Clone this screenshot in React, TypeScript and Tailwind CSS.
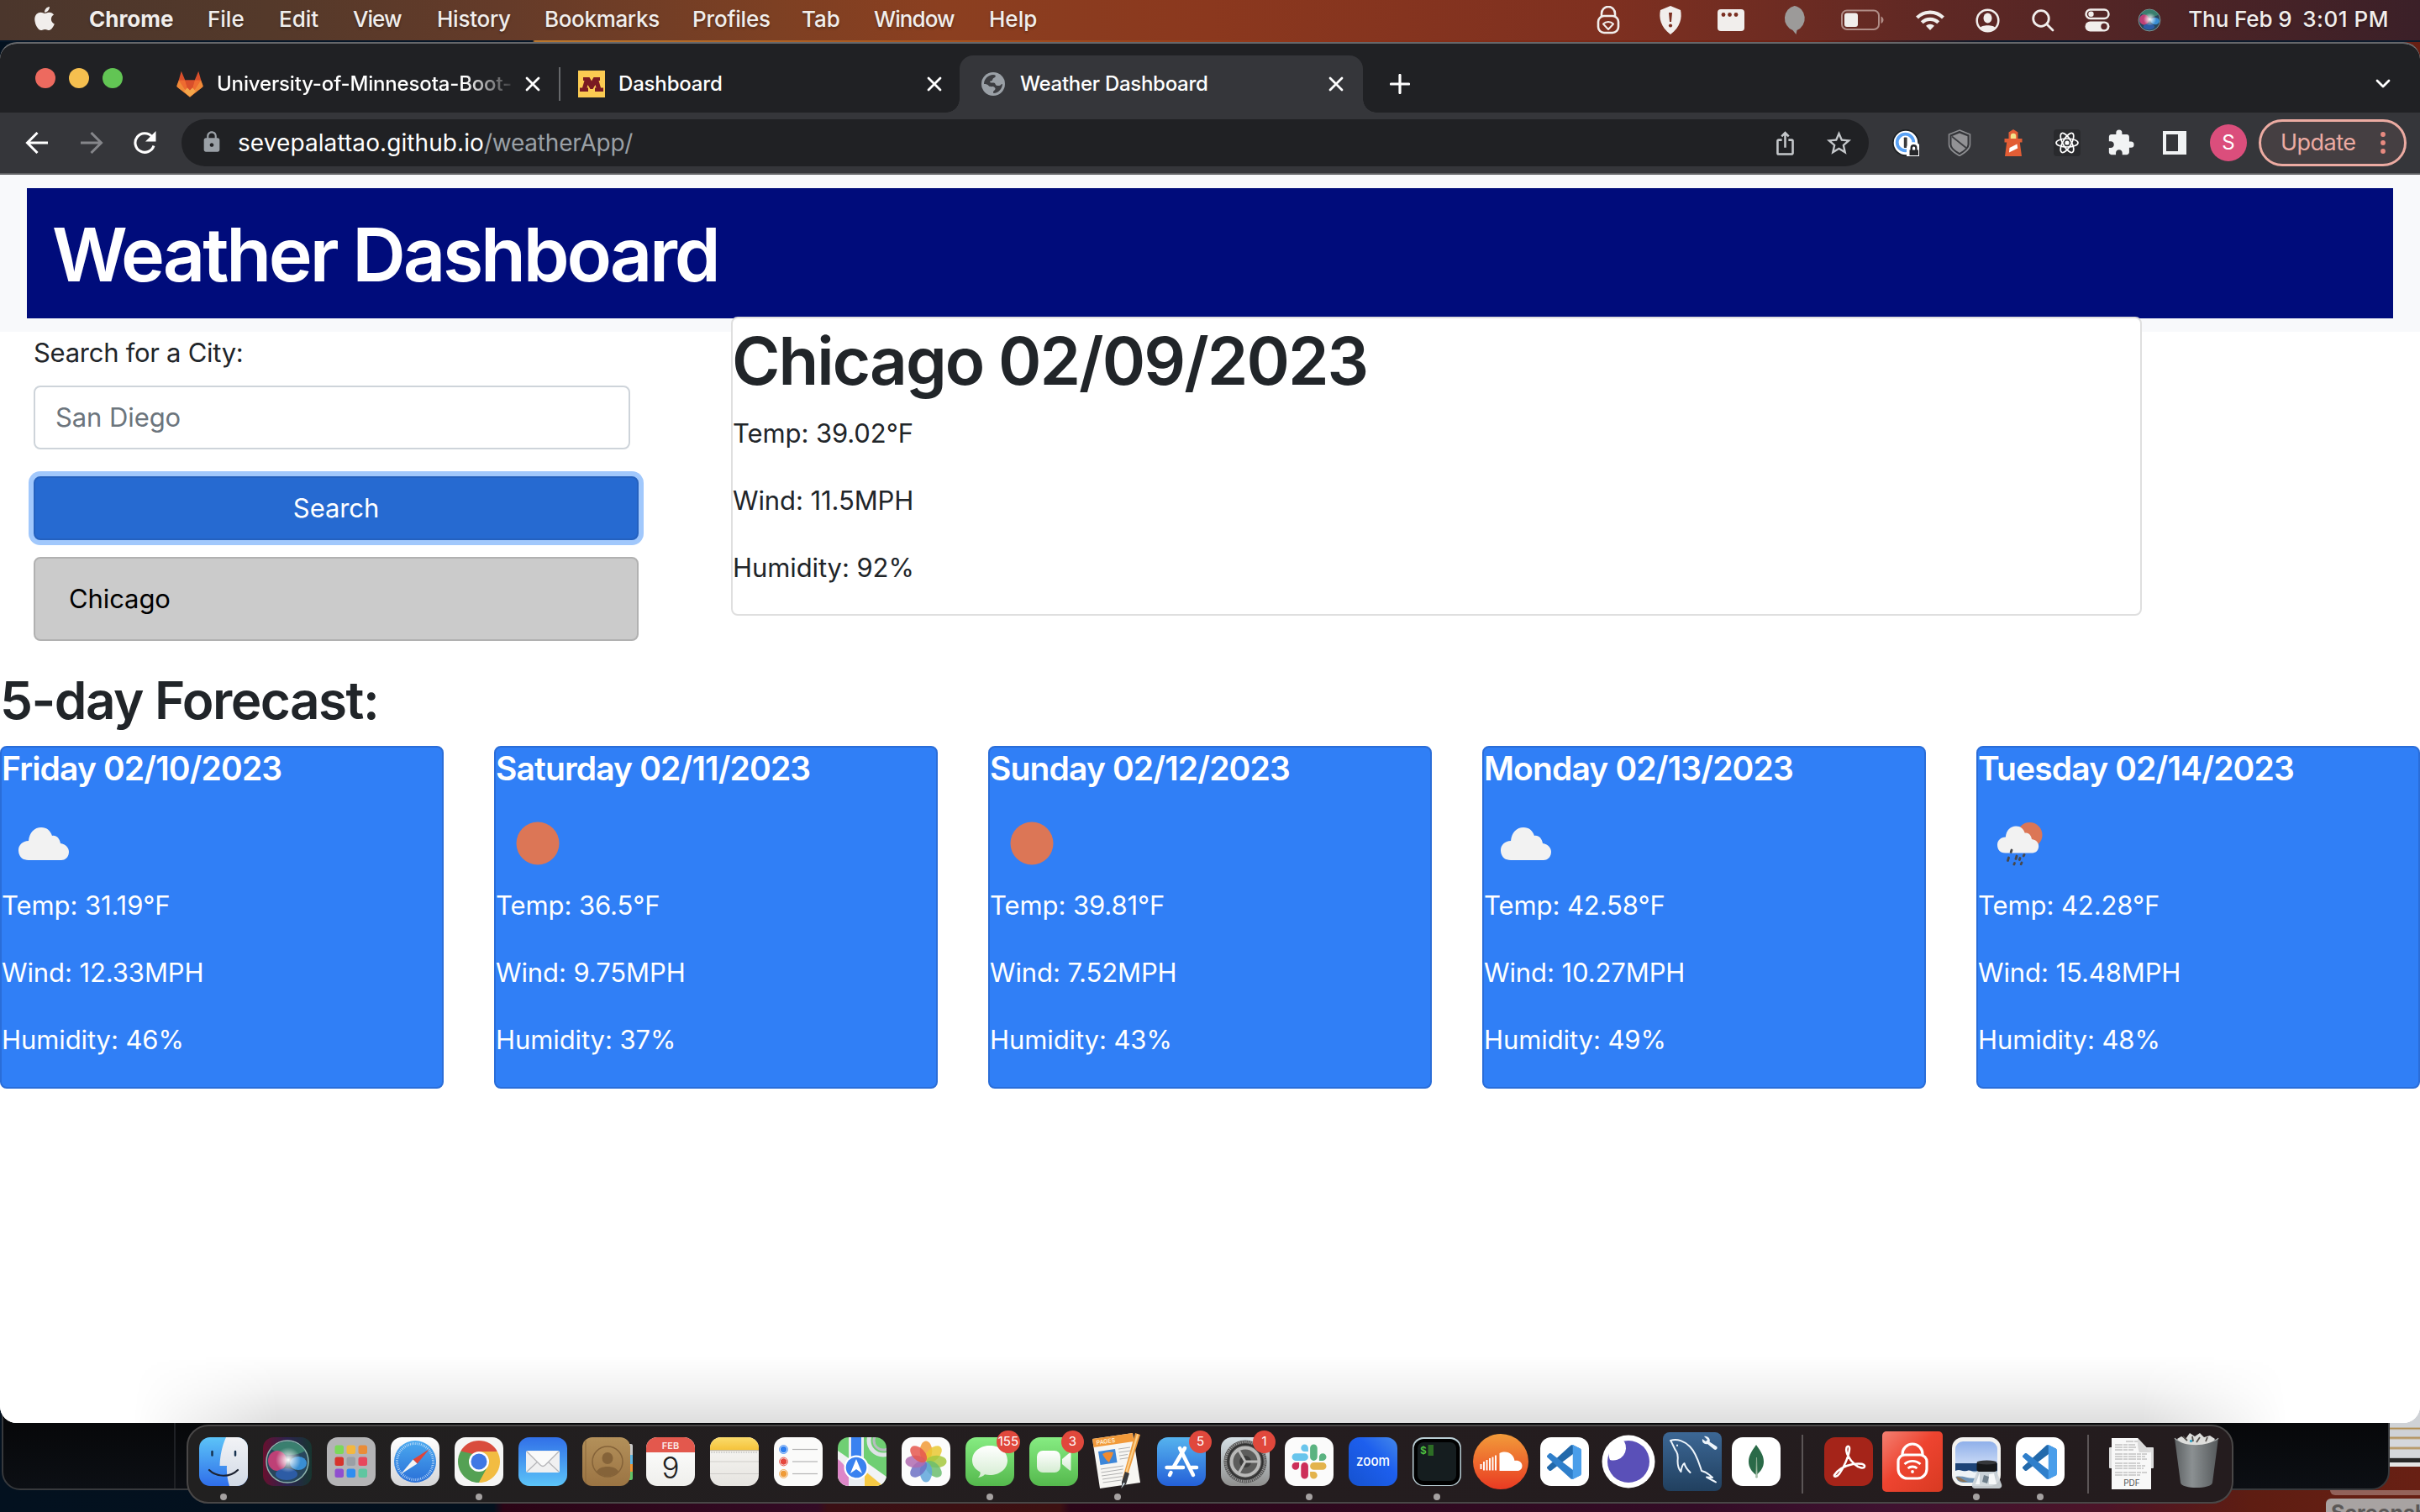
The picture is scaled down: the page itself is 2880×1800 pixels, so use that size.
import React from "react";
import { FaApple } from "react-icons/fa";
import { MdExtension, MdIosShare, MdLock, MdStarOutline } from "react-icons/md";

/* ---------- macOS menu bar ---------- */

const menus = [
  { label: "Chrome", cls: "w-[141px] font-bold" },
  { label: "File", cls: "w-[85px]" },
  { label: "Edit", cls: "w-[88px]" },
  { label: "View", cls: "w-[100px] tracking-[-0.036em]" },
  { label: "History", cls: "w-[128px] tracking-[-0.01em]" },
  { label: "Bookmarks", cls: "w-[176px] tracking-[-0.013em]" },
  { label: "Profiles", cls: "w-[130px] tracking-[-0.007em]" },
  { label: "Tab", cls: "w-[86px]" },
  { label: "Window", cls: "w-[137px] tracking-[-0.035em]" },
  { label: "Help", cls: "w-[80px]" },
];

function MenuBar() {
  return (
    <header className="flex h-12 w-full items-center bg-[linear-gradient(90deg,#4b362c_0%,#54392a_11%,#653b29_21%,#7d4023_32%,#8b3f20_39%,#8b381e_50%,#7f3020_66%,#5f2824_80%,#3b2028_100%)] text-[26px] font-medium text-[#f1eeec] [text-shadow:0_2px_3px_rgba(0,0,0,0.3)]">
      <FaApple className="ml-[39px] mb-1 h-[32px] w-[28px]" />
      <nav className="mb-[3px] ml-[39px] flex">
        {menus.map((m) => (
          <span key={m.label} className={m.cls}>{m.label}</span>
        ))}
      </nav>
      <div className="ml-auto flex h-12 items-center pr-[37px]">
        <svg className="mr-[45px]" width="28" height="34" viewBox="0 0 28 34" fill="none" stroke="currentColor" strokeWidth="2.6">
          <rect x="2" y="12" width="24" height="20" rx="7" />
          <path d="M6 13V9a8 8 0 0 1 16 0v4" />
          <path d="M14 28l-6-6.500a8.500 8.500 0 0 1 12 0z" strokeWidth="2" strokeLinejoin="round" />
        </svg>
        <svg className="mr-[41px]" width="30" height="36" viewBox="0 0 30 36">
          <path d="M15 1l12 5c2 9 0 20-12 29C3 26 1 15 3 6z" fill="currentColor" />
          <path d="M13 9h4l-1 11h-2z" fill="#7a2e20" />
          <circle cx="15" cy="24.500" r="2.100" fill="#7a2e20" />
        </svg>
        <svg className="mr-[45px]" width="32" height="26" viewBox="0 0 32 26">
          <rect width="32" height="26" rx="4" fill="currentColor" />
          <g fill="#7a2e20"><circle cx="7" cy="6.500" r="2.400" /><circle cx="14.500" cy="6.500" r="2.400" /><circle cx="22" cy="6.500" r="2.400" /></g>
        </svg>
        <svg className="mr-[41px]" width="29" height="36" viewBox="0 0 29 36" fill="#9c9a99">
          <path d="M14.500 1a14 15 0 0 1 3 29l-1 5-4-5A14 15 0 0 1 14.500 1z" />
        </svg>
        <svg className="mr-[38px]" width="51" height="26" viewBox="0 0 51 26">
          <rect x="1" y="1.500" width="44" height="22.500" rx="6" fill="none" stroke="#b08c86" strokeWidth="2" />
          <rect x="4" y="4.500" width="16" height="16.500" rx="3" fill="currentColor" />
          <path d="M47.500 8.500c4 1.500 4 7 0 8.500z" fill="#b08c86" />
        </svg>
        <svg className="mr-[37px]" width="34" height="26" viewBox="0 0 34 26" fill="none" stroke="currentColor" strokeWidth="4.200">
          <path d="M1.500 10a22 22 0 0 1 31 0" />
          <path d="M7.200 15.800a14 14 0 0 1 19.600 0" />
          <path d="M17 25l-5-5.200a7.200 7.200 0 0 1 10 0z" fill="currentColor" stroke="none" />
        </svg>
        <svg className="mr-[38px]" width="29" height="29" viewBox="0 0 29 29">
          <circle cx="14.500" cy="14.500" r="12.800" fill="none" stroke="currentColor" strokeWidth="2.500" />
          <ellipse cx="14.500" cy="11.500" rx="5" ry="6" fill="currentColor" />
          <path d="M5 23.500c2-4.500 17-4.500 19 0a13 13 0 0 1-19 0z" fill="currentColor" />
        </svg>
        <svg className="mr-[36px]" width="27" height="27" viewBox="0 0 27 27" fill="none" stroke="currentColor" strokeWidth="2.800" strokeLinecap="round">
          <circle cx="11" cy="11" r="9.300" /><path d="M18 18l7 7" />
        </svg>
        <svg className="mr-[32px]" width="30" height="28" viewBox="0 0 30 28">
          <rect x="1.500" y="1.500" width="27" height="10.500" rx="5.250" fill="none" stroke="currentColor" strokeWidth="2.500" />
          <circle cx="7.500" cy="6.750" r="3.200" fill="currentColor" />
          <rect x="0.500" y="15.500" width="29" height="12" rx="6" fill="currentColor" />
          <circle cx="23" cy="21.500" r="3.700" fill="#572628" />
        </svg>
        <svg className="mr-[31px]" width="30" height="30" viewBox="0 0 58 58"><SiriOrb /></svg>
        <span className="mb-[3px] w-[136px] tracking-[-0.004em]">Thu Feb 9</span>
        <span className="mb-[3px] tracking-[0.02em]">3:01 PM</span>
      </div>
    </header>
  );
}

/* ---------- Chrome tab strip and toolbar ---------- */

function CloseIcon({ className = "" }: { className?: string }) {
  return (
    <svg className={`shrink-0 ${className}`} width="18" height="18" viewBox="0 0 18 18" stroke="#fff" strokeWidth="2.800" strokeLinecap="round">
      <path d="M2 2l14 14M16 2L2 16" />
    </svg>
  );
}

function TabStrip() {
  return (
    <div className="flex h-[82px] w-full bg-[#202124] text-2xl font-medium text-white">
      <div className="flex w-[210px] shrink-0 items-center gap-4 pl-[42px]">
        <i className="size-6 rounded-full bg-[#ed6a5f]" />
        <i className="size-6 rounded-full bg-[#f5bf4f]" />
        <i className="size-6 rounded-full bg-[#62c554]" />
      </div>
      <div className="mt-[14px] flex h-[68px] w-[457px] shrink-0 items-center">
        <svg className="shrink-0" width="32" height="32" viewBox="0 0 32 32">
          <path d="M16 31.500L.5 19 5.800.8 10.300 11.500h11.400L26.200.8 31.500 19z" fill="#d84f2b" />
          <path d="M16 31.500L10.300 11.500H3zM16 31.500l5.700-20H29z" fill="#ee6b31" />
          <path d="M16 31.500L3 11.500.5 17.500c-.3 1 0 2 .7 2.600zM16 31.500l13-20 2.500 6c.3 1 0 2-.7 2.600z" fill="#f08a38" />
          <path d="M10.300 11.500h11.400L16 31.500z" fill="#d84f2b" />
          <path d="M16 31.500l-7-7 4-4 3 3 3-3 4 4z" fill="#f4a64a" />
        </svg>
        <span className="ml-4 w-[351px] shrink-0 overflow-hidden whitespace-nowrap tracking-[-0.0066em] [mask-image:linear-gradient(90deg,#000_84%,transparent_102%)]">University-of-Minnesota-Boot-</span>
        <CloseIcon className="ml-4" />
        <i className="ml-auto h-10 w-0.5 bg-[#66686b]" />
      </div>
      <div className="mt-[14px] flex h-[68px] w-[475px] shrink-0 items-center pl-[21px]">
        <svg width="32" height="32" viewBox="0 0 32 32">
          <rect width="32" height="32" fill="#fbcb52" />
          <path d="M6 8h7.500l2.500 4.500L18.500 8H26v4h-1.500l2.500 8.500h3V25H20v-4.500h1.500l-1-3.500-3 5h-3l-3-5-1 3.500H12V25H2v-4.500h3L7.500 12H6z" fill="#7a1a22" />
        </svg>
        <span className="ml-4 tracking-[-0.007em]">Dashboard</span>
        <CloseIcon className="ml-auto mr-[21px]" />
      </div>
      <div className="relative mt-[14px] flex h-[68px] w-[480px] shrink-0 items-center rounded-t-2xl bg-[#35363a] pl-[26px]">
        <i className="absolute bottom-0 -left-4 size-4 bg-[radial-gradient(circle_at_0_0,transparent_15.5px,#35363a_16px)]" />
        <i className="absolute bottom-0 -right-4 size-4 bg-[radial-gradient(circle_at_100%_0,transparent_15.5px,#35363a_16px)]" />
        <svg width="28" height="28" viewBox="0 0 28 28">
          <circle cx="14" cy="14" r="14" fill="#9aa0a6" />
          <path d="M14 3c2.500 0 3.500 1 2.500 2.500-1 1.500-2.500 1-3 2.500s-.5 2.500-2.500 2.500c-1.500 0-1 2 .5 2 2 0 4.500-.5 5 1.500s2 2 4.500 2c2 0 2-2 4-2-.5 6-4.500 10.500-10.500 11-1-1-.5-2.500 1-3.500s1.500-3-.5-4c-2-1-5 .5-6.500-1.500-1-1.500-3-2-5.500-2C3 8 8 3 14 3z" fill="#3c3d41" />
        </svg>
        <span className="ml-[18px] tracking-[-0.012em]">Weather Dashboard</span>
        <CloseIcon className="ml-auto mr-[23px]" />
      </div>
      <div className="mt-[14px] flex h-[68px] grow items-center pl-8 pr-[35px]">
        <svg width="24" height="24" viewBox="0 0 24 24" stroke="#fff" strokeWidth="3.200" strokeLinecap="round"><path d="M12 1.500v21M1.500 12h21" /></svg>
        <svg className="ml-auto" width="18" height="12" viewBox="0 0 18 12" fill="none" stroke="#fff" strokeWidth="2.800" strokeLinecap="round" strokeLinejoin="round"><path d="M2 2l7 7 7-7" /></svg>
      </div>
    </div>
  );
}

function Toolbar() {
  return (
    <div className="flex h-[74px] w-full items-center border-b-2 border-[#5f6063] bg-[#35363a]">
      <svg className="ml-[30px]" width="28" height="26" viewBox="0 0 28 26" fill="none" stroke="#fff" strokeWidth="3"><path d="M27 13H3M14.500 1L2.500 13l12 12" /></svg>
      <svg className="ml-[37px]" width="28" height="26" viewBox="0 0 28 26" fill="none" stroke="#85868a" strokeWidth="3"><path d="M1 13h24M13.500 1l12 12-12 12" /></svg>
      <svg className="ml-[35px]" width="28" height="28" viewBox="0 0 28 28">
        <path d="M22.700 6.500A11.300 11.300 0 1 0 25 17.500" fill="none" stroke="#fff" strokeWidth="3.100" />
        <path d="M27.500 0v12.500H15z" fill="#fff" />
      </svg>
      <div className="ml-[30px] flex h-14 w-[2008px] items-center rounded-full bg-[#202124] text-[28px]">
        <MdLock className="ml-[22px] mb-0.5 size-7 text-[#9aa0a6]" />
        <span className="ml-[17px] text-white tracking-[0.003em]">sevepalattao.github.io</span>
        <span className="text-[#9aa0a6] tracking-[-0.008em]">/weatherApp/</span>
        <MdIosShare className="ml-auto size-[31px] text-[#c4c7ca]" />
        <MdStarOutline className="ml-[31px] mr-[18px] size-[35px] text-[#c4c7ca]" />
      </div>
      <svg className="ml-[28px]" width="32" height="32" viewBox="0 0 32 32">
        <circle cx="16" cy="16" r="16" fill="#1d2023" />
        <circle cx="16" cy="16" r="14.300" fill="#fff" />
        <circle cx="15.500" cy="15.500" r="9.800" fill="none" stroke="#5aa2f5" strokeWidth="3.800" />
        <rect x="13.800" y="9.500" width="3.800" height="12.500" rx="0.800" fill="#3a3a3c" />
        <path d="M17 32V21a9 9 0 0 1 15-3v14z" fill="#fff" />
        <path d="M20.500 24.500h1V22a4 4 0 0 1 8 0v2.500H31V31H20.500z" fill="#26272a" />
        <path d="M24 24.500V22a1.600 1.600 0 0 1 3.200 0v2.500z" fill="#fff" />
      </svg>
      <svg className="ml-[32px]" width="32" height="32" viewBox="0 0 32 32">
        <path d="M16 1l12.500 5v12c0 5.500-6 9.500-12.500 13.500C9.500 27.500 3.500 23.500 3.500 18V6z" fill="none" stroke="#8c8d90" strokeWidth="1.600" />
        <path d="M16 4.500l9.500 3.700v9.300c0 4.300-4.500 7.500-9.500 10.500-5-3-9.500-6.200-9.500-10.500V8.200z" fill="#929295" />
        <path d="M7 8.500l17.500 14" stroke="#3d3e42" strokeWidth="1.800" />
      </svg>
      <svg className="ml-[32px]" width="32" height="32" viewBox="0 0 32 32">
        <path d="M16 0l5.500 3.500V11h5v4.500h-2.700L26 32H6l2.200-16.500H5.500V11h5V3.500z" fill="#e25d35" />
        <path d="M12.800 11V8a3.200 3.200 0 0 1 6.400 0v3z" fill="#f3e38b" />
        <path d="M11.500 22l9-4.500.7 5L11 27.500z" fill="#fff" />
      </svg>
      <svg className="ml-[32px]" width="32" height="32" viewBox="0 0 32 32" fill="none" stroke="#fff" strokeWidth="1.700">
        <rect width="32" height="32" rx="4" fill="#292a2d" stroke="none" />
        <ellipse cx="16" cy="16" rx="13" ry="5" />
        <ellipse cx="16" cy="16" rx="13" ry="5" transform="rotate(60 16 16)" />
        <ellipse cx="16" cy="16" rx="13" ry="5" transform="rotate(120 16 16)" />
        <circle cx="16" cy="16" r="2.600" fill="#fff" stroke="none" />
      </svg>
      <MdExtension className="ml-[31px] size-[34px] text-[#f1f3f4]" />
      <svg className="ml-[33px]" width="28" height="28" viewBox="0 0 28 28"><path d="M0 0h28v28H0zM4 4v20h14V4z" fill="#f1f3f4" fillRule="evenodd" /></svg>
      <span className="ml-[28px] flex size-11 items-center justify-center rounded-full bg-[#db4e7c] text-[24px] text-white">S</span>
      <div className="ml-[14px] flex h-14 w-[176px] items-center rounded-full border-[3px] border-[#ecaba2] bg-[#453f42] pl-[23px] text-[27px] tracking-[-0.02em] text-[#ecaba2]">
        Update
        <svg className="ml-auto mr-[22px]" width="6" height="28" viewBox="0 0 6 28" fill="#e88a80"><circle cx="3" cy="4" r="2.900" /><circle cx="3" cy="14" r="2.900" /><circle cx="3" cy="24" r="2.900" /></svg>
      </div>
    </div>
  );
}

/* ---------- Weather page ---------- */

const CLOUD = "M12 39C3 39 0 33 0 27c0-6 5-11 12-11C13 6 19 0 27 0c7 0 11 4 13 10 5-1 9 3 10 9 6 1 10 5 10 10 0 6-4 10-9 10z";

function WeatherIcon({ kind }: { kind: string }) {
  return (
    <svg className="block size-[100px]" viewBox="0 0 100 100">
      {kind === "cloud" && <path transform="translate(20 31)" d={CLOUD} fill="#f2f2f2" />}
      {kind === "sun" && <circle cx="50" cy="50" r="25.500" fill="#dc7656" />}
      {kind === "rain" && (
        <g>
          <ellipse cx="61.500" cy="40" rx="15" ry="15" fill="#dc7656" />
          <path transform="translate(23 29.500) scale(0.82)" d={CLOUD} fill="#f2f2f2" />
          <path d="M40 58l-.8 2.500M36.500 67l-1 3.500M46 65l-1 3.500M43.500 73.500l-.6 1.500M52 73l-.8 1.800M55 63.500l-.8 1.500M50 67.500l-.6 2" stroke="#48484a" strokeWidth="2.800" strokeLinecap="round" />
        </g>
      )}
    </svg>
  );
}

function Readings({ temp, wind, humidity }: { temp: string; wind: string; humidity: string }) {
  return (
    <>
      <p className="mb-8 leading-[48px]">Temp: {temp}°F</p>
      <p className="mb-8 leading-[48px]">Wind: {wind}MPH</p>
      <p className="mb-8 leading-[48px]">Humidity: {humidity}%</p>
    </>
  );
}

const forecast = [
  { day: "Friday 02/10/2023", icon: "cloud", temp: "31.19", wind: "12.33", humidity: "46" },
  { day: "Saturday 02/11/2023", icon: "sun", temp: "36.5", wind: "9.75", humidity: "37" },
  { day: "Sunday 02/12/2023", icon: "sun", temp: "39.81", wind: "7.52", humidity: "43" },
  { day: "Monday 02/13/2023", icon: "cloud", temp: "42.58", wind: "10.27", humidity: "49" },
  { day: "Tuesday 02/14/2023", icon: "rain", temp: "42.28", wind: "15.48", humidity: "48" },
];

function WeatherPage() {
  return (
    <main className="grow bg-white text-[31px] tracking-[-0.003em] text-[#212529]">
      <div className="h-[187px] bg-[#f8f9fb] px-8 py-4">
        <h1 className="flex h-[155px] items-center bg-[#000c7b] pl-[30px] pt-[3px] text-[88px] font-[570] tracking-[-0.0365em] text-white">Weather Dashboard</h1>
      </div>
      <div className="flex h-[401px]">
        <section className="w-[870px] pl-10">
          <label className="mt-px block leading-[48px] tracking-[-0.009em]">Search for a City:</label>
          <div className="mt-[15px] flex h-[76px] w-[710px] items-center rounded-lg border-2 border-[#ced4da] pl-6 pt-px text-[#6c757d]">San Diego</div>
          <div className="mt-8 flex h-[76px] w-[720px] items-center justify-center rounded-lg border-2 border-[#2461bf] bg-[#266ad1] pt-px text-white shadow-[0_0_0_6px_#a1c8fc]">Search</div>
          <div className="mt-5 flex h-[100px] w-[720px] items-center rounded-lg border-2 border-[#b1b1b1] bg-[#cbcbcb] pl-[40px] pt-px text-black">Chicago</div>
        </section>
        <section className="relative -mt-[18px] h-[356px] w-[1679px] rounded-lg border-2 border-[#dfdfdf] bg-white">
          <h2 className="-ml-px mb-[14px] pt-[3px] text-[78px] font-[570] leading-[96px] tracking-[-0.025em]">Chicago 02/09/2023</h2>
          <Readings temp="39.02" wind="11.5" humidity="92" />
        </section>
      </div>
      <h2 className="mb-4 text-[62px] font-[570] leading-[76px] tracking-[-0.025em]">5-day Forecast:</h2>
      <div className="grid grid-cols-5 gap-[60px]">
        {forecast.map((f) => (
          <article key={f.day} className="h-[408px] rounded-lg border-2 border-[#2a6dd8] bg-[#307ff6] text-white">
            <h3 className="mb-[15px] pt-px text-[39px] font-[560] leading-[48px] tracking-[-0.022em]">{f.day}</h3>
            <WeatherIcon kind={f.icon} />
            <Readings temp={f.temp} wind={f.wind} humidity={f.humidity} />
          </article>
        ))}
      </div>
    </main>
  );
}

/* ---------- Dock ---------- */

function Grad({ id, from, to }: { id: string; from: string; to: string }) {
  return (
    <linearGradient id={id} x1="0" y1="0" x2="0" y2="1">
      <stop offset="0" stopColor={from} />
      <stop offset="1" stopColor={to} />
    </linearGradient>
  );
}

function Tile({ fill, children }: { fill: string; children?: React.ReactNode }) {
  return (
    <>
      <rect width="58" height="58" rx="13" fill={fill} />
      {children}
    </>
  );
}

function SiriOrb() {
  return (
    <g>
      <defs>
        <radialGradient id="glow"><stop offset="0" stopColor="#fff" /><stop offset="1" stopColor="#fff" stopOpacity="0" /></radialGradient>
      </defs>
      <circle cx="29" cy="29" r="25" fill="#28465c" stroke="#8fb5ad" strokeWidth="1.500" />
      <path d="M10 14a25 25 0 0 1 40 2C40 24 20 22 10 14z" fill="#3f8d74" opacity="0.800" />
      <ellipse cx="17" cy="28" rx="11" ry="12" fill="#d8407a" opacity="0.850" />
      <ellipse cx="42" cy="31" rx="10" ry="8" fill="#3c9be8" opacity="0.850" />
      <ellipse cx="28" cy="44" rx="13" ry="7" fill="#2e62b8" opacity="0.800" />
      <circle cx="30" cy="27" r="15" fill="url(#glow)" />
    </g>
  );
}

function Finder() {
  return (
    <g>
      <defs><Grad id="fi1" from="#5cc4f8" to="#2f6eea" /><Grad id="fi2" from="#f2f3f6" to="#d2dae6" /><clipPath id="fic"><rect width="58" height="58" rx="13" /></clipPath></defs>
      <g clipPath="url(#fic)">
        <rect width="58" height="58" fill="url(#fi1)" />
        <path d="M32 0C27 11 25 22 24.500 34H33c-.5 8 .5 16 3 24h23V0z" fill="url(#fi2)" />
        <path d="M15.500 17v4.500M43 17v4.500" stroke="#16324f" strokeWidth="2.500" strokeLinecap="round" />
        <path d="M12 39c9 9 25 9 34 0" fill="none" stroke="#1c2230" strokeWidth="2.200" strokeLinecap="round" />
      </g>
    </g>
  );
}

function Siri() {
  return (
    <g>
      <defs><linearGradient id="si"><stop offset="0" stopColor="#68102e" /><stop offset="0.500" stopColor="#2c2350" /><stop offset="1" stopColor="#17352f" /></linearGradient></defs>
      <Tile fill="url(#si)"><SiriOrb /></Tile>
    </g>
  );
}

const padColors = ["#7bd85a", "#f3b73f", "#ea8c38", "#d6332c", "#9a9fa5", "#e8475c", "#8f4fcf", "#2f8df0", "#5fc6a0"];

function Launchpad() {
  return (
    <Tile fill="#b4b4b6">
      {padColors.map((c, i) => (
        <rect key={c} x={9.500 + (i % 3) * 14} y={9.500 + Math.floor(i / 3) * 14} width="10.500" height="10.500" rx="2.500" fill={c} />
      ))}
    </Tile>
  );
}

function Safari() {
  return (
    <g>
      <defs><Grad id="sf1" from="#ffffff" to="#d5d5d7" /><Grad id="sf2" from="#4ba9ef" to="#2a70d8" /></defs>
      <Tile fill="url(#sf1)">
        <circle cx="29" cy="29" r="25" fill="url(#sf2)" />
        <circle cx="29" cy="29" r="21.500" fill="none" stroke="#d7e9fb" strokeWidth="3" strokeDasharray="0.700 1.500" />
        <path d="M46 14L26.500 26.500l5 5z" fill="#e0443a" />
        <path d="M12 44l14.500-17.500 5 5z" fill="#f4f4f4" />
      </Tile>
    </g>
  );
}

function Chrome() {
  return (
    <Tile fill="#f5f5f4">
      <path d="M29 29L7.350 16.500a25 25 0 0 1 43.300 0z" fill="#d94c3d" />
      <path d="M29 29L7.350 16.500A25 25 0 0 0 29 54z" fill="#54a154" />
      <path d="M29 29l21.650-12.500A25 25 0 0 1 29 54z" fill="#f2bc42" />
      <path d="M29 17h22l-9 7zM29 54l11-19.500 4 4z" fill="#f2bc42" />
      <path d="M18.600 35L7.350 16.500 22 20zM29 54l10.400-19L29 40z" fill="#54a154" />
      <path d="M29 54l10.400-19 6 4z" fill="#f2bc42" />
      <circle cx="29" cy="29" r="12" fill="#fff" />
      <circle cx="29" cy="29" r="9.500" fill="#3f78e4" />
    </Tile>
  );
}

function Mail() {
  return (
    <g>
      <defs><Grad id="ml" from="#3170e8" to="#5cc4f8" /></defs>
      <Tile fill="url(#ml)">
        <rect x="9" y="16" width="40" height="26" rx="2" fill="#f0f0f1" />
        <path d="M10 41l14-13M48 41L34 28" stroke="#b5b5b8" strokeWidth="1.200" />
        <path d="M10 17l16 16c2 2 4 2 6 0l16-16" fill="#fafafa" stroke="#b5b5b8" strokeWidth="1.300" />
      </Tile>
    </g>
  );
}

function Contacts() {
  return (
    <g>
      <path d="M54 8h4a2 2 0 0 1 2 2v12h-6z" fill="#c9c9c9" /><path d="M54 21h6v11h-6z" fill="#5fb7e5" /><path d="M54 32h6v9h-6z" fill="#ee9434" /><path d="M54 41h6v8a2 2 0 0 1-2 2h-4z" fill="#62c466" />
      <defs><Grad id="ct" from="#b3905a" to="#9b7443" /></defs>
      <rect width="57" height="58" rx="12" fill="url(#ct)" />
      <path d="M4 4v50" stroke="#8a693c" strokeWidth="1" />
      <g fill="#856339"><circle cx="30" cy="29" r="18" fill="none" stroke="#856339" strokeWidth="1.500" /><ellipse cx="30" cy="25" rx="6.500" ry="7" /><path d="M17 41c3-8 23-8 26 0a18 18 0 0 1-26 0z" /></g>
    </g>
  );
}

function Calendar() {
  return (
    <g>
      <defs><Grad id="ca" from="#ffffff" to="#efefec" /></defs>
      <Tile fill="url(#ca)">
        <path d="M0 18v-5A13 13 0 0 1 13 0h32a13 13 0 0 1 13 13v5z" fill="#e3584d" />
        <text x="29" y="14" textAnchor="middle" fontSize="11" fontWeight="600" fill="#fbe9e7">FEB</text>
        <text x="29" y="49" textAnchor="middle" fontSize="35" fontWeight="300" fill="#222">9</text>
      </Tile>
    </g>
  );
}

function Notes() {
  return (
    <g>
      <defs><Grad id="no" from="#f9f8f5" to="#e6e4e0" /><Grad id="no2" from="#fbdc6c" to="#f5c33b" /></defs>
      <Tile fill="url(#no)">
        <path d="M0 15v-2A13 13 0 0 1 13 0h32a13 13 0 0 1 13 13v2z" fill="url(#no2)" />
        <path d="M0 15.700h58" stroke="#b7a98a" strokeWidth="1" /><path d="M1 18h56" stroke="#a9a9a9" strokeWidth="1" strokeDasharray="1 1" />
        <path d="M0 29h58M0 43.500h58" stroke="#cfcdca" strokeWidth="1.200" />
      </Tile>
    </g>
  );
}

function Reminders() {
  return (
    <Tile fill="#fbfbfa">
      {["#2f7ff0", "#e5473d", "#ef9b38"].map((c, i) => (
        <g key={c}>
          <circle cx="11.500" cy={14.500 + i * 14.500} r="4.200" fill={c} stroke="#fbfbfa" strokeWidth="1" />
          <circle cx="11.500" cy={14.500 + i * 14.500} r="4.900" fill="none" stroke={c} strokeWidth="0.900" />
          <path d={`M22 ${14.500 + i * 14.500}h30`} stroke="#b5b5b5" strokeWidth="1.200" />
        </g>
      ))}
    </Tile>
  );
}

function Maps() {
  return (
    <g>
      <defs><clipPath id="mp"><rect width="58" height="58" rx="13" /></clipPath></defs>
      <g clipPath="url(#mp)">
        <rect width="58" height="58" fill="#6fcf73" />
        <path d="M0 16l58 40v2H0z" fill="#eef0f0" />
        <path d="M0 26c8 6 14 14 14 32H0z" fill="#dd86c8" />
        <path d="M32 40l22 18H32z" fill="#f6c944" />
        <path d="M30 27l28 20v11h-4L30 36z" fill="#f2f3f5" />
        <path d="M13 0h18v58H13z" fill="#e9edf2" />
        <path d="M16 0h12v36H16z" fill="#3a82f0" />
        <circle cx="54" cy="4" r="17" fill="none" stroke="#dfe3e6" strokeWidth="5" />
        <circle cx="54" cy="4" r="11" fill="none" stroke="#b7bcc0" strokeWidth="3" />
        <circle cx="22" cy="36" r="14.500" fill="#fff" /><circle cx="22" cy="36" r="12.300" fill="#3a82f0" />
        <path d="M22 26l7 17-7-5-7 5z" fill="#fff" />
      </g>
    </g>
  );
}

const petals = ["#f19a37", "#e9c832", "#a6c83e", "#6bbd6e", "#5fa6da", "#6d71c4", "#b06bb0", "#e5574d"];

function Photos() {
  return (
    <Tile fill="#fcfcfc">
      {petals.map((c, i) => (
        <ellipse key={c} cx="29" cy="16.500" rx="7.300" ry="12" fill={c} opacity="0.850" transform={`rotate(${i * 45} 29 29)`} />
      ))}
    </Tile>
  );
}

function Messages() {
  return (
    <g>
      <defs><Grad id="ms" from="#86ec82" to="#55b94d" /><Grad id="ms2" from="#ffffff" to="#d5ecd2" /></defs>
      <Tile fill="url(#ms)">
        <path d="M29 10c12 0 21 7.500 21 17.500S41 45 29 45c-2 0-4-.3-6-.8-2 2-5 3.500-8 3.800 2-2 3-4 2.500-6.500C11 38 8 33 8 27.500 8 17.500 17 10 29 10z" fill="url(#ms2)" />
      </Tile>
    </g>
  );
}

function FaceTime() {
  return (
    <Tile fill="url(#ms)">
      <rect x="9" y="16" width="28" height="26" rx="7" fill="url(#ms2)" />
      <path d="M39 26l9-7.500c1-.6 1.500 0 1.500 1v19c0 1-.5 1.600-1.500 1L39 32z" fill="url(#ms2)" />
    </Tile>
  );
}

function Pages() {
  return (
    <g>
      <path d="M-1 2L47-5l9 59-48 7z" fill="#f7f6f3" />
      <path d="M-1 2L47-5l1.300 10L.5 12z" fill="#f29a3a" />
      <text x="4" y="9" fontSize="7" fontWeight="500" fill="#fff3df" transform="rotate(-8 4 9)">PAGES</text>
      <path d="M6 17l20-3 2.500 16L8.500 33z" fill="#3d86d8" />
      <path d="M11 20c4-3 9-3 13-2-1 5-4 8-5 12-3-2-6-6-8-10z" fill="#f08a30" />
      <path d="M30 14l14-2M30.500 18l14-2M31 22l10-1.500M31.700 26l10-1.500M9 38l27-4M9.500 42l26-4M10 46l25-3.500M11 50l24-3.500M11.500 54l22-3" stroke="#b0b0b0" strokeWidth="1" />
      <path d="M50-5l6 2-17 55-4 3 0-6z" fill="#ee9b3c" />
      <path d="M52-4l2 .8-15 50-2-.7z" fill="#fbd08c" />
      <path d="M38 41l5 2-4 13-5 5 0-8z" fill="#3a3a3c" /><path d="M36 54l2 1-5 6z" fill="#d9e6ef" />
    </g>
  );
}

function AppStore() {
  return (
    <g>
      <defs><Grad id="as" from="#55b3ee" to="#2460d8" /></defs>
      <Tile fill="url(#as)">
        <g stroke="#fff" strokeWidth="4.500" strokeLinecap="round"><path d="M33 13L20 35M27 13l16 32M11.500 36H31M41 36h6M16.500 42l-1.500 3" /></g>
      </Tile>
    </g>
  );
}

function Settings() {
  return (
    <g>
      <defs><Grad id="st" from="#d5e0e6" to="#8f8f8e" /></defs>
      <Tile fill="url(#st)">
        <circle cx="29" cy="29" r="25.500" fill="#4b4b4b" />
        <circle cx="29" cy="29" r="23.500" fill="none" stroke="#9b9b9b" strokeWidth="3" strokeDasharray="1.300 1.100" />
        <circle cx="29" cy="29" r="20.500" fill="none" stroke="#2e2e2e" strokeWidth="1.500" />
        <circle cx="29" cy="29" r="16.500" fill="#5d5d5c" stroke="#b9b9b8" strokeWidth="4" />
        <circle cx="29" cy="29" r="7" fill="#3c3c3c" />
        <path d="M29 29h17M29 29l-8.500-14.700M29 29l-8.500 14.700" stroke="#b9b9b8" strokeWidth="3" />
      </Tile>
    </g>
  );
}

function Slack() {
  return (
    <Tile fill="#fbfbfb">
      <g transform="translate(8.500 8.500) scale(0.334)">
        <path fill="#cd2f5a" d="M25.800 77.600c0 7.100-5.800 12.900-12.900 12.900S0 84.700 0 77.600s5.800-12.900 12.900-12.900h12.900v12.900zm6.500 0c0-7.100 5.800-12.900 12.900-12.900s12.900 5.800 12.900 12.900v32.300c0 7.100-5.800 12.900-12.900 12.900s-12.900-5.800-12.900-12.900V77.600z" />
        <path fill="#69c5ec" d="M45.200 25.800c-7.100 0-12.900-5.800-12.900-12.900S38.100 0 45.200 0s12.900 5.800 12.900 12.900v12.900H45.200zm0 6.500c7.100 0 12.900 5.800 12.900 12.900s-5.800 12.900-12.900 12.900H12.900C5.800 58.100 0 52.300 0 45.200s5.800-12.900 12.900-12.900h32.300z" />
        <path fill="#5bb381" d="M97 45.200c0-7.100 5.800-12.900 12.900-12.900s12.900 5.800 12.900 12.900-5.800 12.900-12.900 12.900H97V45.200zm-6.500 0c0 7.100-5.800 12.900-12.900 12.900s-12.900-5.800-12.900-12.900V12.900C64.700 5.800 70.500 0 77.600 0s12.900 5.800 12.900 12.900v32.300z" />
        <path fill="#e3b34c" d="M77.600 97c7.100 0 12.900 5.800 12.900 12.900s-5.800 12.900-12.900 12.900-12.900-5.800-12.900-12.900V97h12.900zm0-6.500c-7.100 0-12.900-5.800-12.900-12.900s5.800-12.900 12.900-12.900h32.300c7.100 0 12.900 5.800 12.900 12.900s-5.800 12.900-12.900 12.900H77.600z" />
      </g>
    </Tile>
  );
}

function Zoom() {
  return (
    <g>
      <defs><linearGradient id="zm" x1="0" y1="1" x2="1" y2="0"><stop offset="0" stopColor="#1552cf" /><stop offset="0.600" stopColor="#1d5fee" /><stop offset="1" stopColor="#4488ea" /></linearGradient></defs>
      <Tile fill="url(#zm)"><text x="29" y="33.500" textAnchor="middle" textLength="40" lengthAdjust="spacingAndGlyphs" fontSize="17" fontWeight="500" fill="#fff">zoom</text></Tile>
    </g>
  );
}

function Terminal() {
  return (
    <g>
      <rect width="58" height="58" rx="13" fill="#b9cdd4" /><rect x="1.500" y="2" width="55" height="55" rx="12" fill="#000" />
      <rect x="6" y="6" width="46" height="46" rx="7" fill="#151d1f" />
      <text x="9" y="20" fontSize="12" fontWeight="600" fill="#4fc440">$</text>
      <rect x="18.500" y="9" width="6.500" height="13" fill="#2d6e25" />
    </g>
  );
}

function SoundCloud() {
  return (
    <g>
      <defs><Grad id="sc" from="#f29b3a" to="#e93a22" /></defs>
      <circle cx="29" cy="29" r="33" fill="url(#sc)" />
      <path d="M30 19c9-4 17 1 18 9 5-1 9 2 9 6s-3 6-6 6H30z" fill="#fff" transform="translate(-2.500 0)" />
      <path d="M5.500 32v6M9 29v10.500M12.500 27v12.500M16 25v14.500M19.500 23.500v16M23 21.500v18" stroke="#fff" strokeWidth="1.900" />
    </g>
  );
}

function VSCode() {
  return (
    <Tile fill="#fff">
      <g transform="translate(8 9) scale(0.41)">
        <path fill="#2269ab" d="M96.461 10.796L75.857.876C73.472-.273 70.622.212 68.750 2.083L1.299 63.583C-.516 65.237-.514 68.094 1.303 69.745L6.813 74.754C8.298 76.104 10.535 76.204 12.134 74.990L93.361 13.370C96.086 11.303 100 13.246 100 16.667V16.427C100 14.026 98.625 11.838 96.461 10.796Z" />
        <path fill="#2f7fcb" d="M96.461 89.204L75.857 99.125C73.472 100.273 70.622 99.788 68.750 97.917L1.299 36.417C-.516 34.763-.514 31.906 1.303 30.255L6.813 25.246C8.298 23.896 10.535 23.796 12.134 25.010L93.361 86.630C96.086 88.697 100 86.754 100 83.333V83.573C100 85.974 98.625 88.162 96.461 89.204Z" />
        <path fill="#4a9eea" d="M75.858 99.126C73.472 100.274 70.622 99.789 68.750 97.917C71.056 100.223 75 98.590 75 95.328V4.672C75 1.410 71.056-.223 68.750 2.083C70.622.211 73.472-.274 75.858.874L96.459 10.781C98.623 11.822 100 14.011 100 16.413V83.587C100 85.989 98.623 88.179 96.459 89.220L75.858 99.126Z" />
      </g>
    </Tile>
  );
}

function Insomnia() {
  return (
    <g>
      <circle cx="29" cy="29" r="31.500" fill="#fff" /><circle cx="29" cy="29" r="25" fill="#5a50b8" />
      <path d="M24 5a15 15 0 0 1-17 22C2 14 12 2 24 5z" fill="#fff" />
    </g>
  );
}

function MySQL() {
  return (
    <g>
      <defs><Grad id="my" from="#3c6795" to="#21405f" /></defs>
      <rect x="-6" y="-6" width="70" height="70" rx="8" fill="url(#my)" />
      <g fill="none" stroke="#eef5fb" strokeWidth="2" strokeLinejoin="round" strokeLinecap="round">
        <path d="M3 4c8-3 17 1 23 7 8 8 11 20 14 29 4 1 9 4 13 8l-7-.5c3 2 8 4 11 6M3 4c3 4 4 9 7 13 2 3 2 7 1.500 11 0 5 1 10 4 13 .5-4 1-8 4-10 1 5 4 8 7 11" />
        <path d="M11 9.500v.5" />
      </g>
      <path d="M43-1c4-1 8 3 6.500 6.500L58 11c2 2-1 5-3 3.500l-8-6.500c-4 1-7-2-6-6l4 3 2-2z" fill="#eef5fb" />
    </g>
  );
}

function MongoDB() {
  return (
    <Tile fill="#fff">
      <path d="M29 9c4 6 9 12 9 20 0 7-4 12-8.200 15.500h-1.600C24 41 20 36 20 29c0-8 5-14 9-20z" fill="#2a6a48" />
      <path d="M29.500 24L28.700 48h1.600z" fill="#b9cbb9" stroke="#8fae94" strokeWidth="0.800" />
    </Tile>
  );
}

function Acrobat() {
  return (
    <Tile fill="#a52419">
      <path d="M12 45c4-6 12-11 22-13 9-1.500 15 0 14 3s-7 1.500-12-3C30 27 25 18 26.500 12.500c1-3 4-2 3.500 2-1 9-7 22-12 29-3 4-7 4-6 1.500z" fill="none" stroke="#fff" strokeWidth="2.500" />
    </Tile>
  );
}

function LockApp() {
  return (
    <g>
      <defs><linearGradient id="lk" x1="0" y1="0" x2="1" y2="1"><stop offset="0" stopColor="#f38072" /><stop offset="0.450" stopColor="#ee4430" /><stop offset="1" stopColor="#d83a22" /></linearGradient></defs>
      <rect x="-7" y="-7" width="72" height="72" rx="5" fill="url(#lk)" />
      <g fill="none" stroke="#fff" strokeWidth="3.200">
        <path d="M17 22V20a12 12 0 0 1 24 0v2" /><path d="M20 21h18c5 0 8 4 8 8v9c0 6-5 11-11 11H23c-6 0-11-5-11-11v-9c0-4 3-8 8-8z" />
        <path d="M19.500 32a14 14 0 0 1 19 0M23.500 37a8.500 8.500 0 0 1 11 0" strokeWidth="2.800" />
      </g>
      <circle cx="29" cy="41" r="1.900" fill="#fff" />
    </g>
  );
}

function Preview() {
  return (
    <g>
      <defs><Grad id="pv" from="#8fb0ea" to="#c8d8f5" /></defs>
      <Tile fill="#f3f2f0">
        <path d="M4 32V14A9 9 0 0 1 13 5h32a9 9 0 0 1 9 9v18z" fill="url(#pv)" />
        <path d="M4 31h50v10H4z" fill="#1e4478" /><path d="M4 40h50v5a9 9 0 0 1-9 9H13a9 9 0 0 1-9-9z" fill="#6f93b5" />
        <path d="M4 40c6-3 9 2 14 0s6 3 12 1v7c-9 3-15-3-26-1z" fill="#eef3f6" /><path d="M5 47c5 0 8 4 14 6H13a9 9 0 0 1-8-6z" fill="#8d7355" />
      </Tile>
      <path d="M30 40h23l6 16c1 3-1 5-4 5H28c-3 0-5-2-4-5z" fill="#cfd6da" opacity="0.920" />
      <path d="M33 42l-5 14h5zM44 44l6-1 3 13h-9z" fill="#f6f8f9" /><path d="M38 45l6 2-2 8-6-2z" fill="#70808c" />
      <rect x="29.500" y="29" width="24" height="12" rx="3" fill="#17181a" /><ellipse cx="41.500" cy="30" rx="12" ry="2.500" fill="#35373a" />
    </g>
  );
}

function PdfStack() {
  return (
    <g>
      <rect x="1" y="12" width="53" height="25" rx="1" fill="#dcdcdc" />
      <path d="M4 1h31l16 17v44H4z" fill="#f8f8f8" />
      <path d="M21 5h14M8 9h24M8 12h26M8 15h22M8 20h38M8 23h36M8 26h38M8 31h30M8 34h36M8 37h34M8 42h38M8 45h30" stroke="#a8a8a8" strokeWidth="1.200" strokeDasharray="9 1 5 1" />
      <path d="M35 1c0 8 0 12 2 17h14z" fill="#d9d9d9" />
      <text x="28" y="58" textAnchor="middle" fontSize="10" fill="#555">PDF</text>
    </g>
  );
}

function Trash() {
  return (
    <g>
      <defs><linearGradient id="tr"><stop offset="0" stopColor="#5d6163" /><stop offset="0.400" stopColor="#8b9092" /><stop offset="1" stopColor="#55595b" /></linearGradient></defs>
      <path d="M3 1c4 7 48 7 52 0l-7 53c-1 8-37 8-38 0z" fill="url(#tr)" />
      <path d="M3 1c4 7 48 7 52 0" fill="none" stroke="#a5a9aa" strokeWidth="1.200" />
      <path d="M6 2l5-3 5 3 5-7 6 4 6-4 5 5 7-2 6 4c-4 9-40 10-45 0z" fill="#dddddb" />
      <path d="M13-1l5 5M24-1l1 6M33 0l-4 6M42 0l-2 5" stroke="#55504c" strokeWidth="1.800" /><path d="M21 3h3v3h-3z" fill="#3fa6c6" />
    </g>
  );
}

type App = { name: string; icon: React.ReactNode; badge?: string; running?: boolean };

const apps: App[] = [
  { name: "Finder", icon: <Finder />, running: true },
  { name: "Siri", icon: <Siri /> },
  { name: "Launchpad", icon: <Launchpad /> },
  { name: "Safari", icon: <Safari /> },
  { name: "Chrome", icon: <Chrome />, running: true },
  { name: "Mail", icon: <Mail /> },
  { name: "Contacts", icon: <Contacts /> },
  { name: "Calendar", icon: <Calendar /> },
  { name: "Notes", icon: <Notes /> },
  { name: "Reminders", icon: <Reminders /> },
  { name: "Maps", icon: <Maps /> },
  { name: "Photos", icon: <Photos /> },
  { name: "Messages", icon: <Messages />, badge: "155", running: true },
  { name: "FaceTime", icon: <FaceTime />, badge: "3" },
  { name: "Pages", icon: <Pages />, running: true },
  { name: "App Store", icon: <AppStore />, badge: "5" },
  { name: "Settings", icon: <Settings />, badge: "1" },
  { name: "Slack", icon: <Slack />, running: true },
  { name: "Zoom", icon: <Zoom /> },
  { name: "Terminal", icon: <Terminal />, running: true },
  { name: "SoundCloud", icon: <SoundCloud /> },
  { name: "VS Code", icon: <VSCode /> },
  { name: "Insomnia", icon: <Insomnia /> },
  { name: "MySQL Workbench", icon: <MySQL /> },
  { name: "MongoDB", icon: <MongoDB /> },
];

const utilities: App[] = [
  { name: "Acrobat", icon: <Acrobat /> },
  { name: "Lock", icon: <LockApp /> },
  { name: "Preview", icon: <Preview />, running: true },
  { name: "VS Code", icon: <VSCode />, running: true },
];

const places: App[] = [
  { name: "Documents", icon: <PdfStack /> },
  { name: "Trash", icon: <Trash /> },
];

function DockItem({ app }: { app: App }) {
  return (
    <div className="relative flex w-[76px] shrink-0 flex-col items-center pt-[13px]">
      <svg className="size-[58px] overflow-visible" viewBox="0 0 58 58">{app.icon}</svg>
      {app.badge && (
        <span className="absolute right-0.5 top-[5px] flex h-[27px] min-w-[27px] items-center justify-center rounded-full bg-[#e0483c] px-[2px] text-[15px] text-white">{app.badge}</span>
      )}
      {app.running && <i className="mt-[9px] size-2 rounded-full bg-[#a5a1a1]" />}
    </div>
  );
}

function Dock() {
  return (
    <div className="absolute left-[222px] top-[1696px] flex h-[94px] w-[2436px] rounded-[26px] border-2 border-[#494747] bg-[linear-gradient(90deg,#212020,#241d1f_50%,#241c1e)] pl-1">
      {apps.map((a) => <DockItem key={a.name} app={a} />)}
      <i className="ml-4 mt-2.5 h-[70px] w-0.5 bg-[#5b5556]" />
      <div className="ml-4 flex">{utilities.map((a) => <DockItem key={a.name} app={a} />)}</div>
      <i className="ml-[18px] mt-2.5 h-[70px] w-0.5 bg-[#5b5556]" />
      <div className="ml-[14px] flex">{places.map((a) => <DockItem key={a.name} app={a} />)}</div>
    </div>
  );
}

/* ---------- Desktop ---------- */

export default function App() {
  return (
    <div className="relative h-[1800px] w-[2880px] overflow-hidden bg-[linear-gradient(90deg,#03111f_0%,#03101d_20.4%,#2b0415_20.8%,#330b25_33.8%,#3b0f14_34.2%,#3d1112_43.8%,#2b0618_44.2%,#330c26_70%,#3f1230_78%,#4c1428_87%,#5e1d12_93%,#682014_100%)] font-['Inter',sans-serif]">
      <MenuBar />
      <div className="h-0.5 w-full bg-[linear-gradient(90deg,#051628_22%,#b9772e_22.1%,#a8551f_38%,#8c3218_55%,#6b2115_75%,#0c1a2c_82%)]" />

      <div className="absolute left-[2844px] top-[1670px] h-[76px] w-9 bg-[linear-gradient(180deg,#cfd2d6_38%,#b08a4c_40%,#cfd2d6_43%,#cfd2d6_52%,#b08a4c_55%,#d5d8db_58%,#d5d8db_68%,#b08a4c_71%,#d5d8db_74%,#d5d8db_86%,#282828_87%,#282828_93%,#e4e4e4_94%)]" />
      <div className="absolute left-[2773px] top-[1774px] h-[6px] w-[120px] rounded-b-lg bg-white/30" />
      <div className="absolute left-[2768px] top-[1784px] h-[30px] w-[120px] overflow-hidden rounded-t-md bg-[#a8a3a2] pl-1.5 text-[25px] font-bold leading-[34px] text-[#5b5857]">Screensh</div>
      <div className="absolute left-0.5 top-[1600px] h-[174px] w-[2842px] rounded-[22px] border-2 border-[#37393c] bg-[linear-gradient(180deg,#07080a_55%,#0c0f14)]">
        <i className="ml-[203px] block h-full w-0.5 bg-[#1f2125]" />
      </div>

      <div className="absolute left-0 top-[50px] flex h-[1644px] w-full flex-col overflow-hidden rounded-[20px] border-t-2 border-[#66676a] bg-white">
        <TabStrip />
        <Toolbar />
        <WeatherPage />
        <div className="absolute bottom-0 left-0 h-[80px] w-full bg-[linear-gradient(180deg,transparent,rgba(0,0,0,0.05)_50%,rgba(0,0,0,0.13))] [mask-image:linear-gradient(90deg,transparent_5.500%,#000_11.500%,#000_88.500%,transparent_94.500%)]" />
      </div>

      <Dock />
    </div>
  );
}
